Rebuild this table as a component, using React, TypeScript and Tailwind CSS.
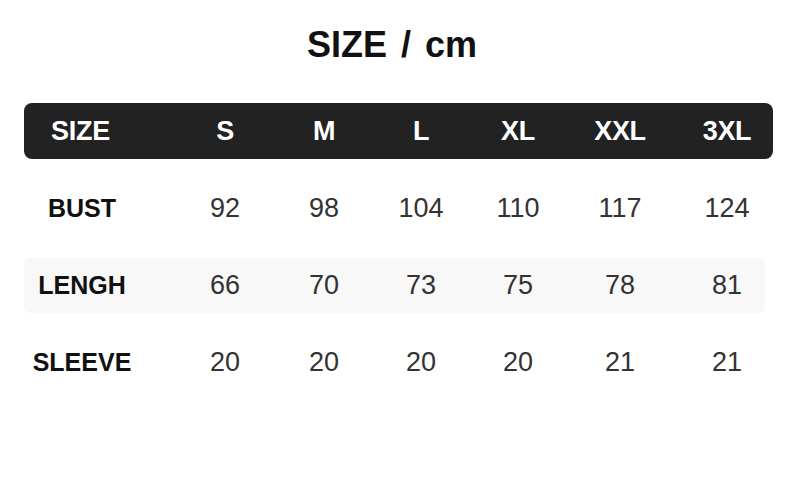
import React from "react";

const cols = ["S", "M", "L", "XL", "XXL", "3XL"];
const rows: { label: string; values: string[]; shaded?: boolean }[] = [
  { label: "BUST", values: ["92", "98", "104", "110", "117", "124"] },
  { label: "LENGH", values: ["66", "70", "73", "75", "78", "81"], shaded: true },
  { label: "SLEEVE", values: ["20", "20", "20", "20", "21", "21"] },
];

const grid = "grid grid-cols-[151px_100px_98px_96px_98px_106px_100px] items-center";

export default function App() {
  return (
    <div
      className="w-[800px] h-[501px] bg-white overflow-hidden"
      style={{ fontFamily: '"Liberation Sans", Arial, sans-serif' }}
    >
      <div className="pt-[27px] flex justify-center">
        <h1 className="text-[36px] leading-none font-bold text-[#111] [word-spacing:4px] pr-[16px]">
          SIZE / cm
        </h1>
      </div>

      <div className="ml-[24px] mt-[40px]">
        <div className={`${grid} w-[749px] h-[56px] rounded-[8px] bg-[#222222] text-white text-[27px] font-bold leading-none tracking-[-0.3px]`}>
          <div className="pr-[38px] text-center">SIZE</div>
          {cols.map((c, i) => (
            <div key={c} className={i === cols.length - 1 ? "pl-[8px] text-center" : "text-center"}>
              {c}
            </div>
          ))}
        </div>

        <div className="mt-[22px] flex flex-col gap-[22px]">
          {rows.map((r) => (
            <div
              key={r.label}
              className={`${grid} w-[741px] h-[55px] rounded-[6px] ${r.shaded ? "bg-[#f8f8f8]" : "bg-white"}`}
            >
              <div className="pr-[35px] text-center text-[25px] font-bold leading-none text-[#111]">
                {r.label}
              </div>
              {r.values.map((v, i) => (
                <div
                  key={i}
                  className={`text-center text-[27px] leading-none text-[#333] ${i === r.values.length - 1 ? "pl-[8px]" : ""}`}
                >
                  {v}
                </div>
              ))}
            </div>
          ))}
        </div>
      </div>
    </div>
  );
}
